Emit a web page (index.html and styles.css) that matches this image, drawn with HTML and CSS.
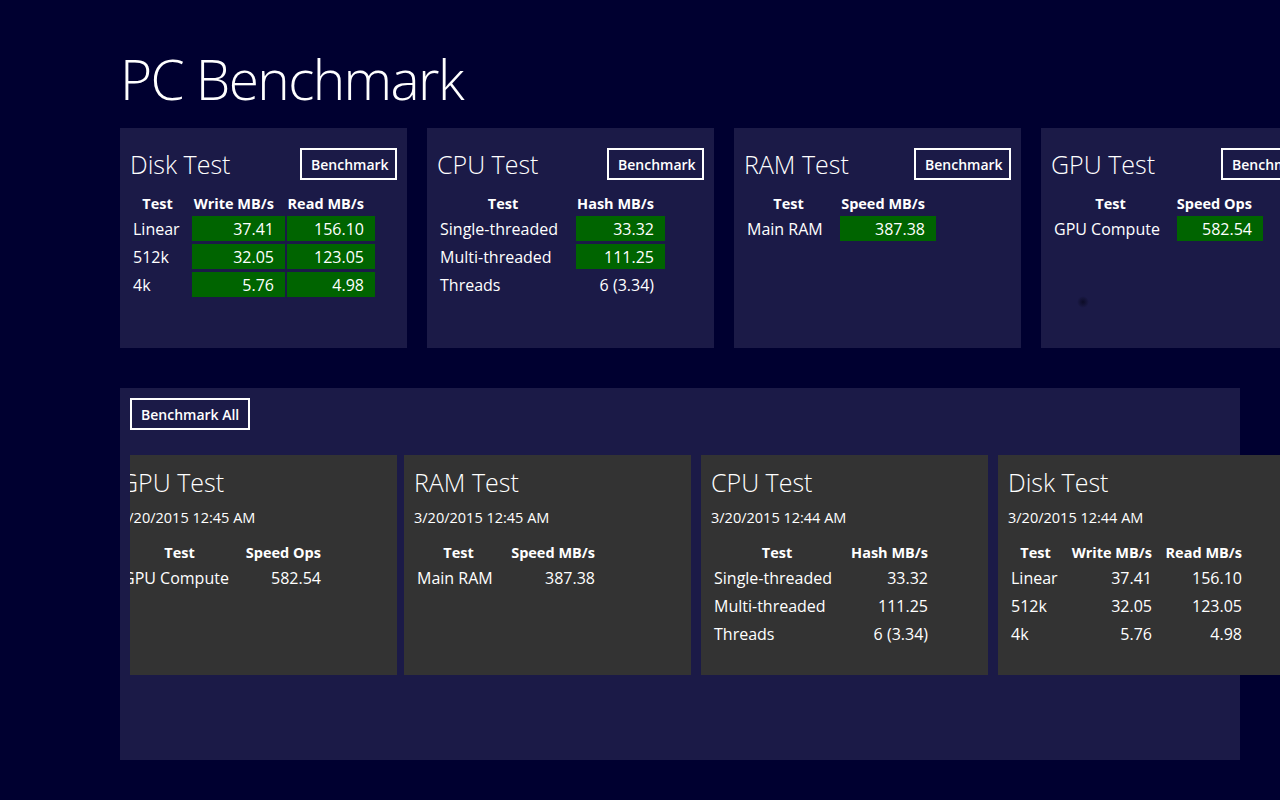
FILE: index.html
```html
<!DOCTYPE html>
<html lang="en">
<head>
    <meta charset="UTF-8">
    <meta name="viewport" content="width=device-width, initial-scale=1.0">
    <title>PC Benchmark</title>
    <link rel="stylesheet" href="styles.css">
</head>
<body>
  <div class="page">
    <h1 class="app_title">PC Benchmark</h1>

    <!-- live tests -->
    <div class="tiles">
      <section class="tile">
        <div class="tile_head">
          <h2>Disk Test</h2>
          <button class="btn">Benchmark</button>
        </div>
        <div class="grid t_disk">
          <span class="th lbl">Test</span><span class="th val">Write MB/s</span><span class="th val">Read MB/s</span>
          <span class="lbl">Linear</span><span class="val hi">37.41</span><span class="val hi">156.10</span>
          <span class="lbl">512k</span><span class="val hi">32.05</span><span class="val hi">123.05</span>
          <span class="lbl">4k</span><span class="val hi">5.76</span><span class="val hi">4.98</span>
        </div>
      </section>
      <section class="tile">
        <div class="tile_head">
          <h2>CPU Test</h2>
          <button class="btn">Benchmark</button>
        </div>
        <div class="grid t_cpu">
          <span class="th lbl">Test</span><span class="th val">Hash MB/s</span>
          <span class="lbl">Single-threaded</span><span class="val hi">33.32</span>
          <span class="lbl">Multi-threaded</span><span class="val hi">111.25</span>
          <span class="lbl">Threads</span><span class="val">6 (3.34)</span>
        </div>
      </section>
      <section class="tile">
        <div class="tile_head">
          <h2>RAM Test</h2>
          <button class="btn">Benchmark</button>
        </div>
        <div class="grid t_ram">
          <span class="th lbl">Test</span><span class="th val">Speed MB/s</span>
          <span class="lbl">Main RAM</span><span class="val hi">387.38</span>
        </div>
      </section>
      <section class="tile">
        <div class="tile_head">
          <h2>GPU Test</h2>
          <button class="btn">Benchmark</button>
        </div>
        <div class="grid t_gpu">
          <span class="th lbl">Test</span><span class="th val">Speed Ops</span>
          <span class="lbl">GPU Compute</span><span class="val hi">582.54</span>
        </div>
        <span class="ring"></span>
      </section>
    </div>

    <!-- history -->
    <div class="history">
      <button class="btn btn_all">Benchmark All</button>
      <div class="strip">
        <div class="strip_row">
          <section class="tile old first">
            <h2>GPU Test</h2>
            <p class="date">3/20/2015 12:45 AM</p>
            <div class="grid t_gpu">
              <span class="th lbl">Test</span><span class="th val">Speed Ops</span>
              <span class="lbl">GPU Compute</span><span class="val">582.54</span>
            </div>
          </section>
          <section class="tile old">
            <h2>RAM Test</h2>
            <p class="date">3/20/2015 12:45 AM</p>
            <div class="grid t_ram">
              <span class="th lbl">Test</span><span class="th val">Speed MB/s</span>
              <span class="lbl">Main RAM</span><span class="val">387.38</span>
            </div>
          </section>
          <section class="tile old">
            <h2>CPU Test</h2>
            <p class="date">3/20/2015 12:44 AM</p>
            <div class="grid t_cpu">
              <span class="th lbl">Test</span><span class="th val">Hash MB/s</span>
              <span class="lbl">Single-threaded</span><span class="val">33.32</span>
              <span class="lbl">Multi-threaded</span><span class="val">111.25</span>
              <span class="lbl">Threads</span><span class="val">6 (3.34)</span>
            </div>
          </section>
          <section class="tile old">
            <h2>Disk Test</h2>
            <p class="date">3/20/2015 12:44 AM</p>
            <div class="grid t_disk">
              <span class="th lbl">Test</span><span class="th val">Write MB/s</span><span class="th val">Read MB/s</span>
              <span class="lbl">Linear</span><span class="val">37.41</span><span class="val">156.10</span>
              <span class="lbl">512k</span><span class="val">32.05</span><span class="val">123.05</span>
              <span class="lbl">4k</span><span class="val">5.76</span><span class="val">4.98</span>
            </div>
          </section>
        </div>
      </div>
    </div>
  </div>
</body>
</html>
```

FILE: styles.css
```css
*{margin:0;padding:0;box-sizing:border-box;}
html,body{width:1280px;height:800px;overflow:hidden;}
body{background-color:#000030;color:#fff;font-family:"Open Sans","Noto Sans","DejaVu Sans",sans-serif;font-size:16px;}

.page{padding-left:120px;}
.app_title{font-size:55px;font-weight:300;line-height:56px;margin-top:51px;letter-spacing:-1.6px;}

/* top row of tiles */
.tiles{display:flex;gap:20px;margin-top:21px;}
.tile{position:relative;flex-shrink:0;width:287px;height:220px;background-color:#1b1a47;padding:20px 10px 0 10px;}
.tile_head{display:flex;justify-content:space-between;align-items:center;height:32px;}
h2{font-size:25px;font-weight:300;line-height:32px;}

.btn{display:block;font-family:inherit;font-size:14px;font-weight:600;color:#fff;background:transparent;border:2px solid #fff;height:32px;padding:0 9px;white-space:nowrap;}
.tile_head .btn{width:97px;}

/* result grids */
.grid{display:grid;grid-template-rows:21px;grid-auto-rows:25px;row-gap:3px;column-gap:2px;margin-top:12px;}
.t_disk{grid-template-columns:60px 93px 88px;}
.t_cpu{grid-template-columns:137px 89px;}
.t_ram{grid-template-columns:94px 96px;}
.t_gpu{grid-template-columns:124px 86px;}
.grid span{display:flex;align-items:center;white-space:nowrap;padding-top:1px;}
.lbl{padding:0 8px 0 3px;}
.val{justify-content:flex-end;padding-right:11px;}
.th{font-size:14.5px;font-weight:700;}
.th.lbl{justify-content:center;}
.hi{background-color:#006400;}

.ring{position:absolute;left:36px;top:168px;width:12px;height:12px;border-radius:50%;background:radial-gradient(circle,rgba(8,8,30,.8) 0,rgba(8,8,30,0) 70%);}

/* history panel */
.history{width:1120px;height:372px;margin-top:40px;background-color:#1b1a47;padding:10px;}
.btn_all{width:120px;}
.strip{width:1150px;margin-top:25px;overflow:hidden;}
.strip_row{display:flex;gap:10px;margin-left:-20px;}
.tile.old{background-color:#333;padding:11px 10px 0 10px;}
.tile.old.first{margin-right:-3px;}
.date{font-size:14.5px;line-height:20px;margin-top:10px;}
.tile.old .grid{margin-top:13px;}
```
